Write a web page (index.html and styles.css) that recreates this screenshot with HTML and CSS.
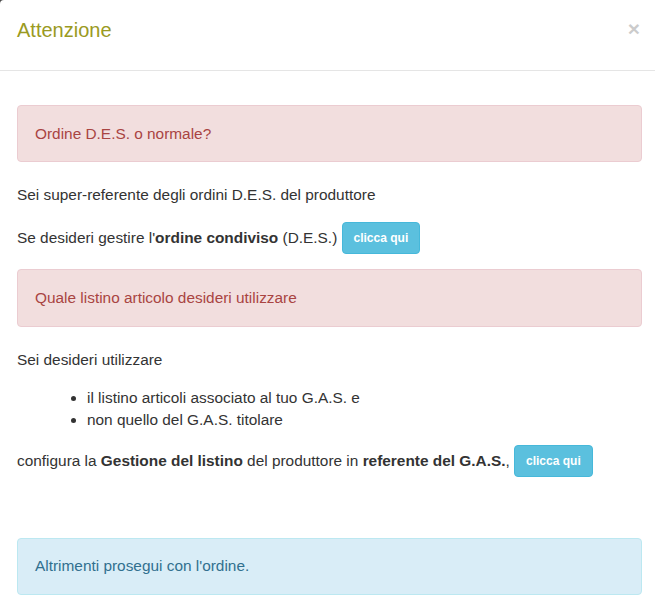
FILE: index.html
```html
<!DOCTYPE html>
<html lang="it">
<head>
<meta charset="utf-8">
<title>Attenzione</title>
<link rel="stylesheet" href="styles.css">
</head>
<body>
<div class="modal">
  <div class="modal-header">
    <h4 class="modal-title">Attenzione</h4>
    <button class="close" type="button">&times;</button>
  </div>
  <div class="modal-body">
    <div class="alert alert-danger">Ordine D.E.S. o normale?</div>
    <p class="first">Sei super-referente degli ordini D.E.S. del produttore</p>
    <p class="action">Se desideri gestire l'<b>ordine condiviso</b> (D.E.S.) <a class="btn" href="#">clicca qui</a></p>
    <div class="alert alert-danger second">Quale listino articolo desideri utilizzare</div>
    <p class="first">Sei desideri utilizzare</p>
    <ul class="list">
      <li>il listino articoli associato al tuo G.A.S. e</li>
      <li>non quello del G.A.S. titolare</li>
    </ul>
    <p class="action">configura la <b>Gestione del listino</b> del produttore in <b>referente del G.A.S.</b>, <a class="btn" href="#">clicca qui</a></p>
    <div class="alert alert-info last">Altrimenti prosegui con l'ordine.</div>
  </div>
</div>
</body>
</html>
```
FILE: styles.css
```css
html {
  background: #4a4a4a;
}
body {
  margin: 0;
  font-family: "Liberation Sans", Arial, sans-serif;
  font-size: 15.4px;
  line-height: 22px;
  color: #333;
}
.modal {
  background: #fff;
  border-top-left-radius: 4px;
  min-height: 606px;
  overflow: hidden;
}
.modal-header {
  display: flex;
  justify-content: space-between;
  align-items: flex-start;
  padding: 16px 15px 26px 17px;
  border-bottom: 1px solid #e5e5e5;
}
.modal-title {
  margin: 0;
  font-size: 20px;
  line-height: 28px;
  font-weight: normal;
  color: #9a9a22;
}
.close {
  margin: 0;
  padding: 0;
  border: 0;
  background: none;
  font-family: "Liberation Sans", Arial, sans-serif;
  font-size: 21px;
  line-height: 20px;
  font-weight: bold;
  color: #000;
  opacity: 0.2;
  margin-top: 3px;
}
.modal-body {
  padding: 34px 13px 13px 17px;
}
.alert {
  padding: 16.5px 17px;
  border: 1px solid transparent;
  border-radius: 4px;
  margin-bottom: 22px;
}
.alert-danger {
  background: #f2dede;
  border-color: #ebccd1;
  color: #a94442;
}
.alert-info {
  background: #d9edf7;
  border-color: #bce8f1;
  color: #31708f;
}
.alert.second {
  margin-top: 10px;
  padding-top: 17px;
}
.alert.last {
  margin-top: 56px;
}
p {
  margin: 0 0 11px;
}
.action {
  margin-bottom: 0;
  min-height: 42px;
  display: flex;
  align-items: center;
  flex-wrap: wrap;
  white-space: pre-wrap;
}
.action b {
  white-space: pre;
}
.btn {
  display: inline-block;
  box-sizing: border-box;
  height: 32px;
  padding: 0 11px;
  line-height: 30px;
  font-size: 12px;
  font-weight: bold;
  color: #fff;
  text-decoration: none;
  background: #5bc0de;
  border: 1px solid #46b8da;
  border-radius: 4px;
}
.list {
  margin: 16px 0 9px;
  padding-left: 70px;
}
```
